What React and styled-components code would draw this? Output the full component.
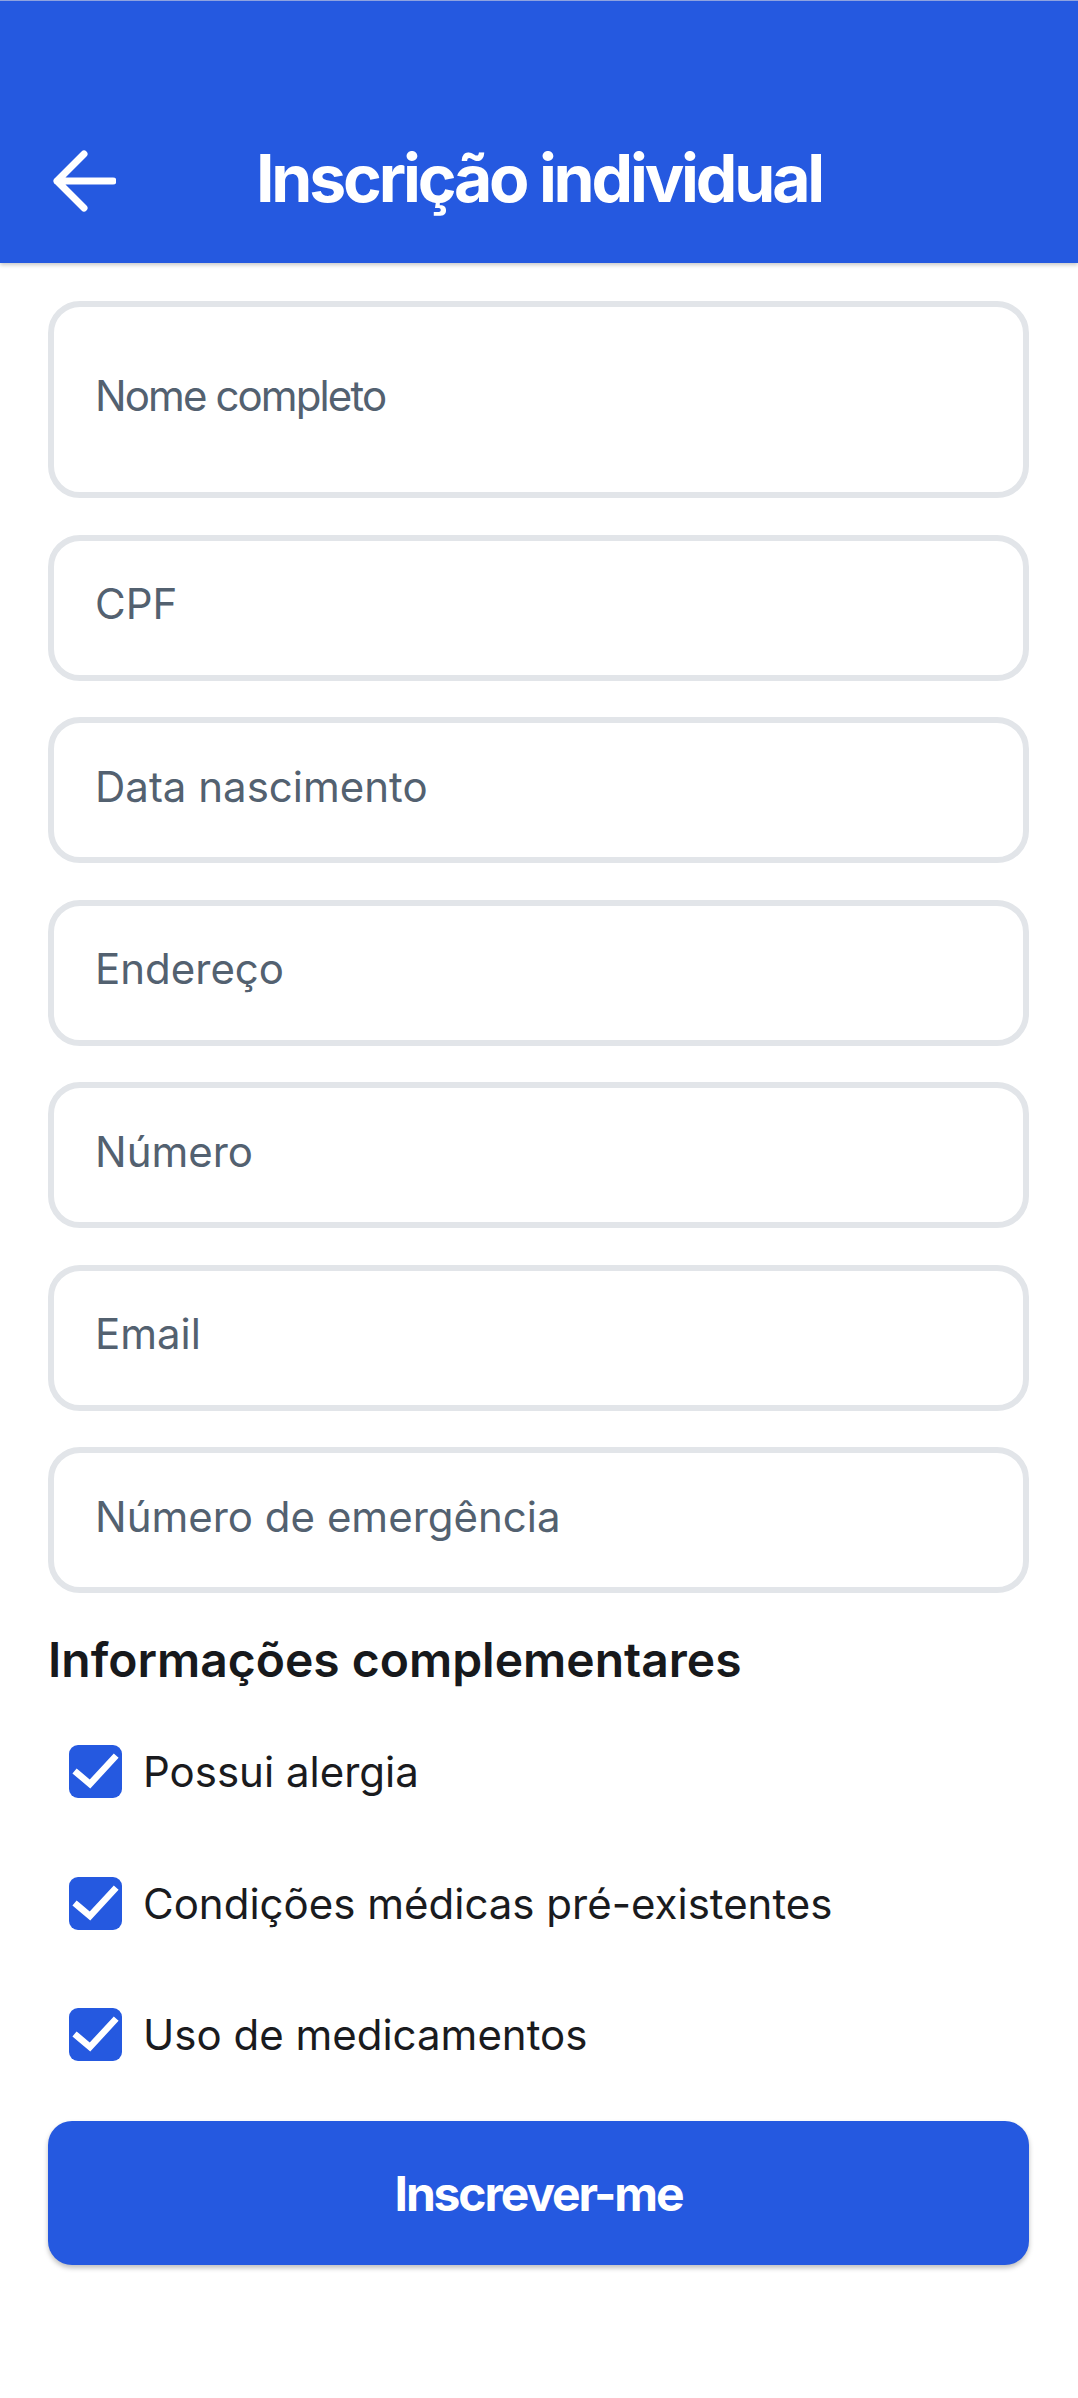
import React, { useState } from 'react';
import styled, { createGlobalStyle } from 'styled-components';

const BLUE = '#2559e0';

const fields = [
  { id: 'nome', label: 'Nome completo', tall: true },
  { id: 'cpf', label: 'CPF' },
  { id: 'nascimento', label: 'Data nascimento' },
  { id: 'endereco', label: 'Endereço' },
  { id: 'numero', label: 'Número' },
  { id: 'email', label: 'Email' },
  { id: 'emergencia', label: 'Número de emergência' },
];

const extras = [
  { id: 'alergia', label: 'Possui alergia' },
  { id: 'condicoes', label: 'Condições médicas pré-existentes' },
  { id: 'medicamentos', label: 'Uso de medicamentos' },
];

function BackArrow() {
  return (
    <svg width="64" height="64" viewBox="0 0 64 64" fill="none">
      <path
        d="M61 32H5M32 5L5 32l27 27"
        stroke="#fff"
        strokeWidth="7"
        strokeLinecap="round"
        strokeLinejoin="round"
      />
    </svg>
  );
}

function Check() {
  return (
    <svg width="53" height="53" viewBox="0 0 53 53" fill="none">
      <path
        d="M8 28l13 11L45 13"
        stroke="#fff"
        strokeWidth="6.5"
        strokeLinecap="square"
      />
    </svg>
  );
}

export default function App() {
  const [checked, setChecked] = useState({
    alergia: true,
    condicoes: true,
    medicamentos: true,
  });

  const toggle = id => {
    setChecked(prev => ({ ...prev, [id]: !prev[id] }));
  };

  return (
    <Screen>
      <GlobalStyle />
      <Header>
        <BackButton aria-label="Voltar">
          <BackArrow />
        </BackButton>
        <Title>Inscrição individual</Title>
      </Header>

      <Form onSubmit={e => e.preventDefault()}>
        <Fields>
          {fields.map(f => (
            <Field key={f.id} placeholder={f.label} $tall={f.tall} />
          ))}
        </Fields>

        <SectionTitle>Informações complementares</SectionTitle>

        <Options>
          {extras.map(o => (
            <Option key={o.id}>
              <HiddenBox
                type="checkbox"
                checked={checked[o.id]}
                onChange={() => toggle(o.id)}
              />
              <Box $on={checked[o.id]}>{checked[o.id] && <Check />}</Box>
              <OptionText>{o.label}</OptionText>
            </Option>
          ))}
        </Options>

        <Submit type="submit">Inscrever-me</Submit>
      </Form>
    </Screen>
  );
}

const GlobalStyle = createGlobalStyle`
  body {
    margin: 0;
    background: #fff;
    font-family: Inter, "Noto Sans", sans-serif;
  }
  * {
    box-sizing: border-box;
  }
`;

const Screen = styled.div`
  width: 1078px;
  min-height: 2398px;
  background: #fff;
`;

const Header = styled.header`
  display: flex;
  align-items: center;
  gap: 140px;
  height: 263px;
  padding: 130px 0 32px 52px;
  background: ${BLUE};
  border-top: 1px solid #8fa3df;
  box-shadow: 0 2px 4px rgba(0, 0, 0, 0.22);
`;

const BackButton = styled.button`
  display: flex;
  padding: 0;
  border: none;
  background: none;
  cursor: pointer;
`;

const Title = styled.h1`
  margin: 0 0 6px;
  color: #fff;
  font-size: 66px;
  font-weight: 700;
  letter-spacing: -0.048em;
`;

const Form = styled.form`
  display: flex;
  flex-direction: column;
  padding: 38px 49px 0 48px;
`;

const Fields = styled.div`
  display: flex;
  flex-direction: column;
  gap: 36.5px;
`;

const Field = styled.input`
  width: 100%;
  height: ${p => (p.$tall ? '197px' : '146px')};
  padding: 0 40px 8px 41px;
  border: 6px solid #e2e5e9;
  border-radius: 32px;
  background: #fff;
  font-family: Inter, "Noto Sans", sans-serif;
  font-size: 42px;
  letter-spacing: ${p => (p.$tall ? '-0.045em' : '0')};
  color: #1c1f23;
  outline: none;

  &::placeholder {
    color: #536170;
    opacity: 1;
  }
`;

const SectionTitle = styled.h2`
  margin: 37px 0 0;
  color: #17191c;
  font-size: 48px;
  font-weight: 600;
`;

const Options = styled.div`
  display: flex;
  flex-direction: column;
  gap: 78.5px;
  margin-top: 56px;
  padding-left: 21px;
`;

const Option = styled.label`
  position: relative;
  display: flex;
  align-items: center;
  gap: 21px;
  height: 53px;
  cursor: pointer;
`;

const HiddenBox = styled.input`
  position: absolute;
  opacity: 0;
  width: 0;
  height: 0;
`;

const Box = styled.span`
  display: flex;
  width: 53px;
  height: 53px;
  border-radius: 9px;
  background: ${p => (p.$on ? BLUE : '#fff')};
  border: ${p => (p.$on ? 'none' : '4px solid #9aa3ad')};
`;

const OptionText = styled.span`
  color: #1a1b1e;
  font-size: 42px;
`;

const Submit = styled.button`
  height: 144px;
  margin-top: 60px;
  border: none;
  border-radius: 24px;
  background: ${BLUE};
  color: #fff;
  font-family: Inter, "Noto Sans", sans-serif;
  font-size: 48px;
  font-weight: 700;
  letter-spacing: -0.045em;
  box-shadow: 0 3px 5px rgba(0, 0, 0, 0.25);
  cursor: pointer;
`;
